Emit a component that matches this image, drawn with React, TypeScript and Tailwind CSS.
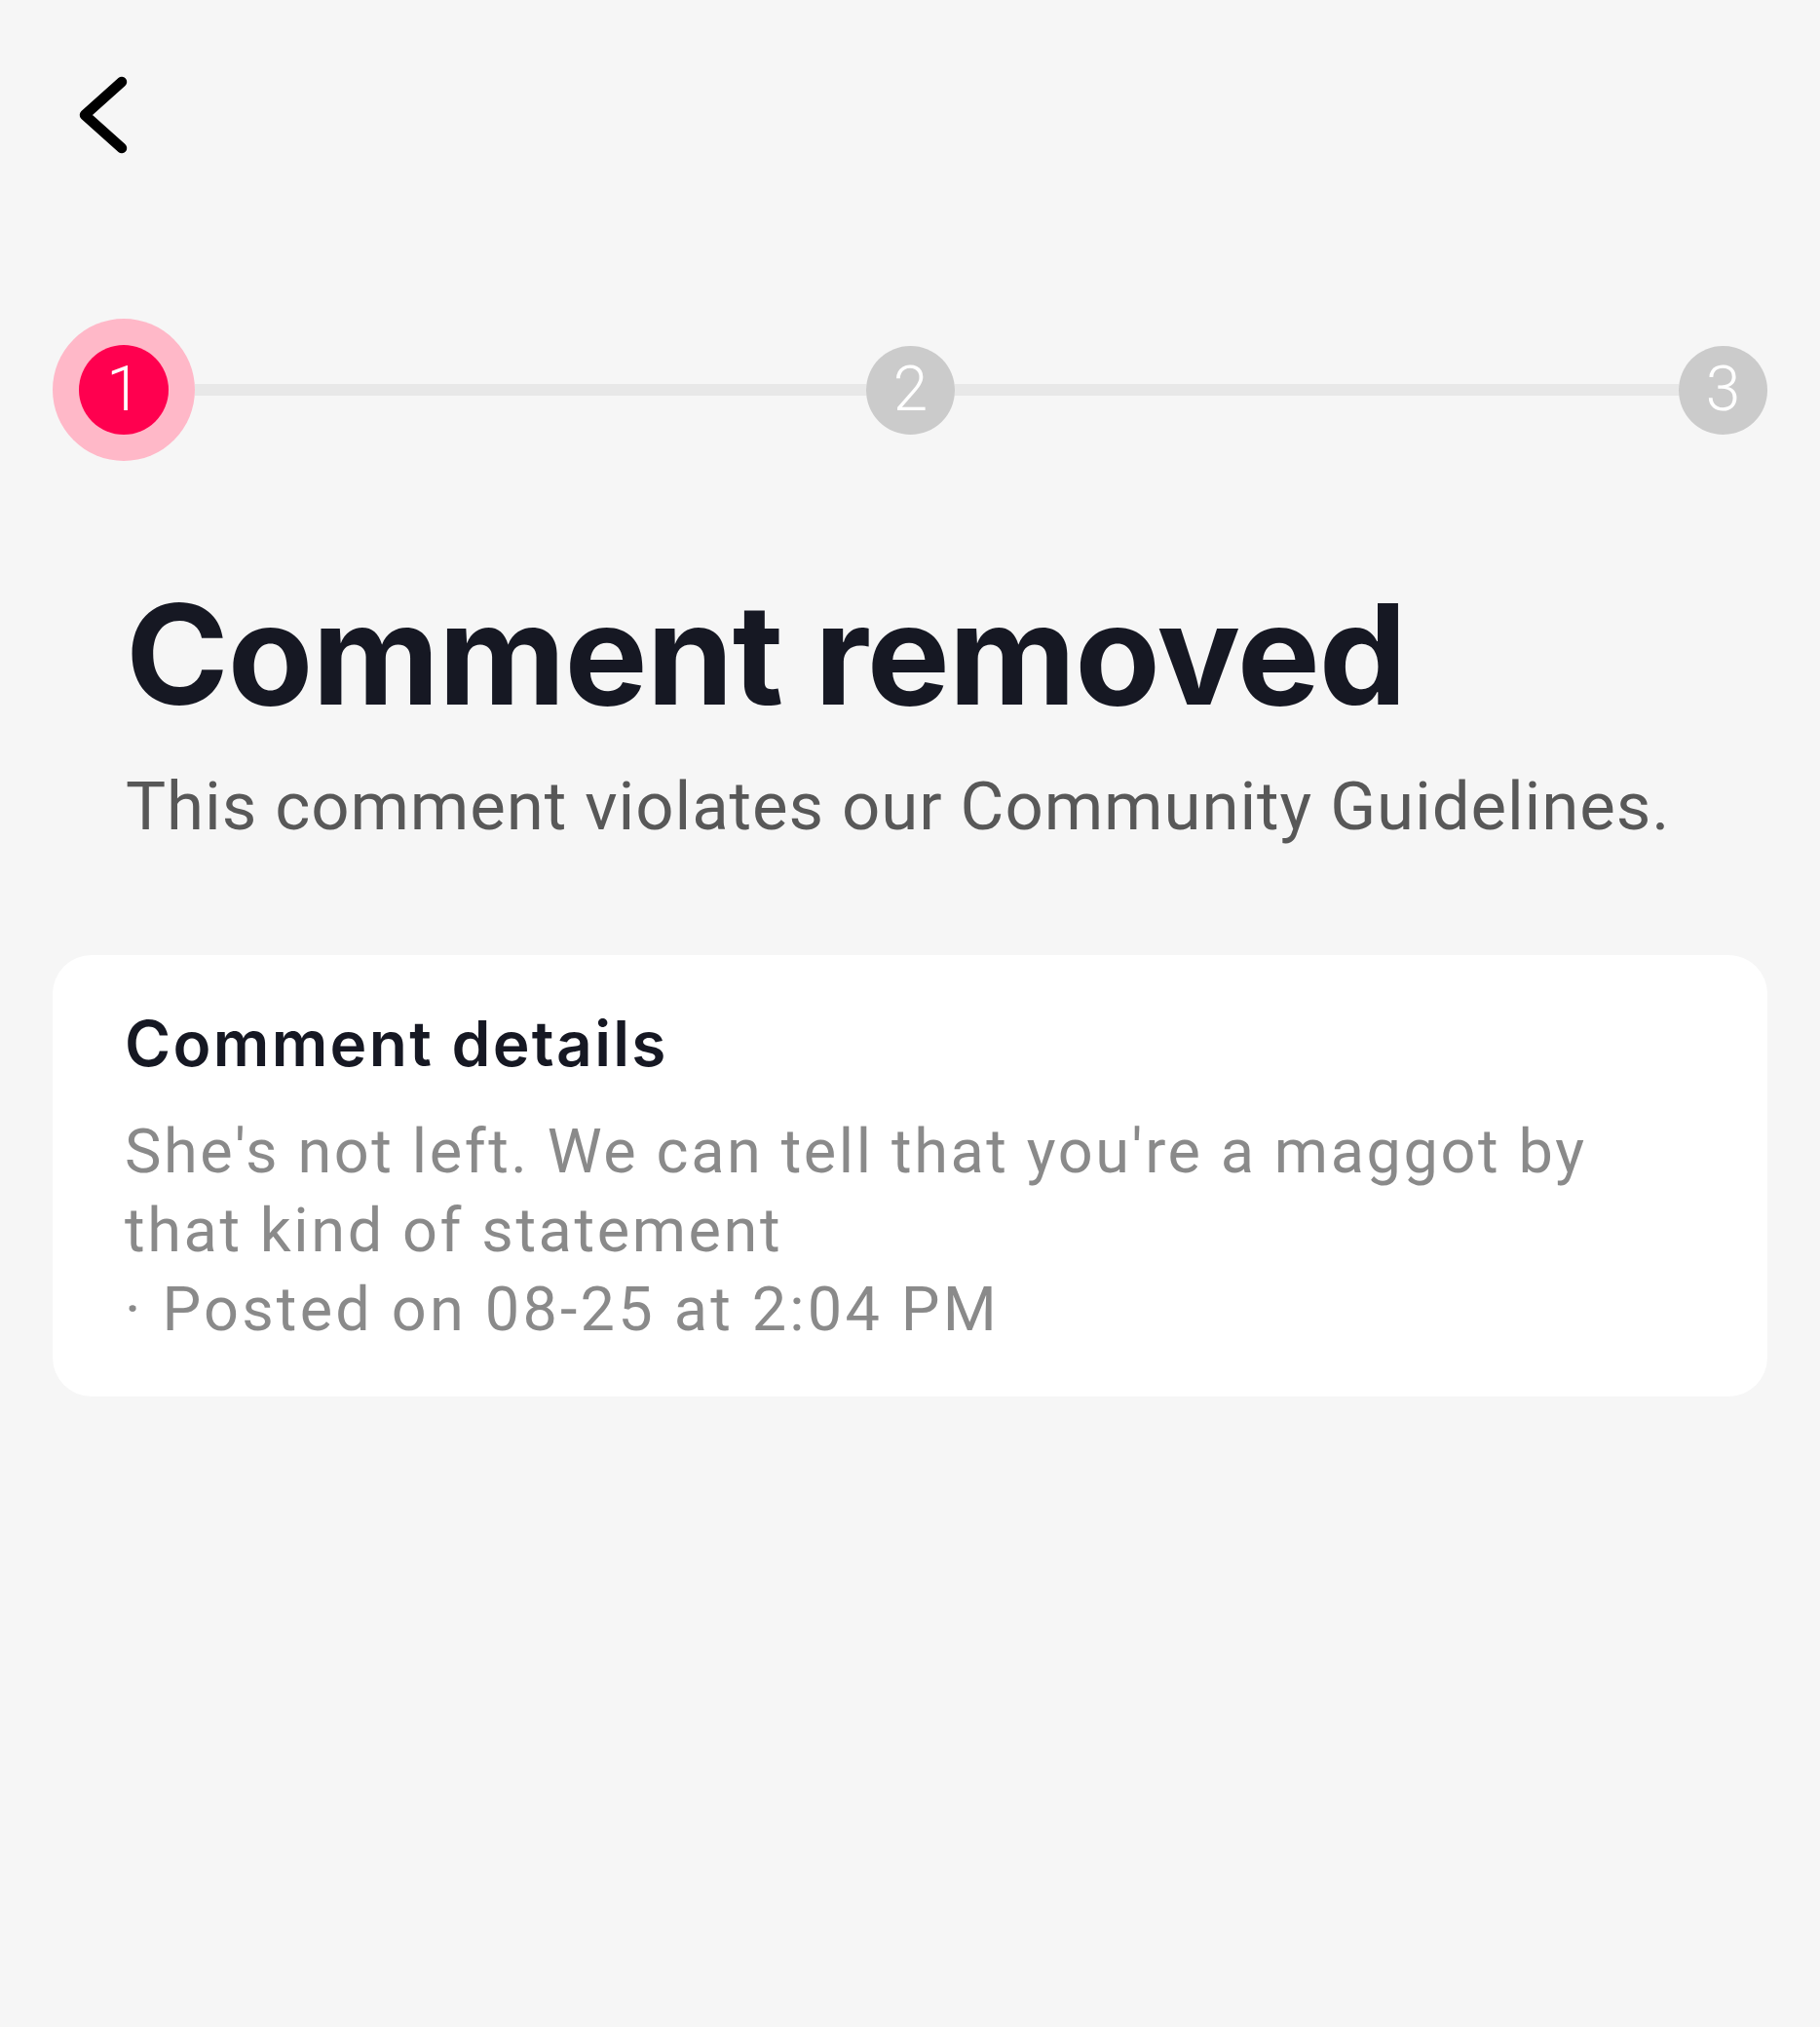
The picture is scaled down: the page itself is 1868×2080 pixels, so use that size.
import React from "react";

const body = { fontFamily: "Roboto, 'Liberation Sans', sans-serif" };
const title = { fontFamily: "Inter, 'Liberation Sans', sans-serif" };

function Step({ n, active }: { n: number; active?: boolean }) {
  if (active) {
    return (
      <div className="flex h-[146px] w-[146px] shrink-0 items-center justify-center rounded-full bg-[#ffb8c8]">
        <div
          className="flex h-[92px] w-[92px] items-center justify-center rounded-full bg-[#ff004f] text-[64px] font-light leading-none text-white"
          style={body}
        >
          {n}
        </div>
      </div>
    );
  }
  return (
    <div
      className="flex h-[91px] w-[91px] shrink-0 items-center justify-center rounded-full bg-[#cbcbcb] text-[64px] font-light leading-none text-white"
      style={body}
    >
      {n}
    </div>
  );
}

export default function App() {
  return (
    <div className="min-h-[2080px] w-full bg-[#f6f6f6] px-[54px]">
      <div className="h-[327px] pl-[24px] pt-[76px]">
        <svg width="56" height="84" viewBox="0 0 56 84" fill="none" className="block">
          <polyline
            points="47,8 9,42 47,76"
            stroke="#000"
            strokeWidth="10.5"
            strokeLinecap="round"
            strokeLinejoin="round"
          />
        </svg>
      </div>

      <div className="flex items-center">
        <Step n={1} active />
        <div className="h-[12px] w-[689px] bg-[#e8e8e8]" />
        <Step n={2} />
        <div className="h-[12px] flex-1 bg-[#e8e8e8]" />
        <Step n={3} />
      </div>

      <div className="px-[75px]">
        <h1
          className="mt-[126px] whitespace-nowrap text-[143px] font-bold leading-none tracking-[-1px] text-[#161823]"
          style={title}
        >
          Comment removed
        </h1>
        <p
          className="mt-[51px] whitespace-nowrap text-[69px] leading-none tracking-[0.9px] text-[#585858]"
          style={body}
        >
          This comment violates our Community Guidelines.
        </p>
      </div>

      <div className="mt-[118px] rounded-[40px] bg-white px-[74px] pb-[49px] pt-[59px]">
        <h2
          className="whitespace-nowrap text-[64px] font-semibold leading-none tracking-[2.3px] text-[#161823]"
          style={title}
        >
          Comment details
        </h2>
        <div
          className="mt-[38px] text-[63px] leading-[81px] tracking-[2.6px] text-[#8a8a8a]"
          style={body}
        >
          <div className="whitespace-nowrap">
            She's not left. We can tell that you're a maggot by
          </div>
          <div className="whitespace-nowrap">that kind of statement</div>
          <div className="whitespace-nowrap tracking-[3.2px]">· Posted on 08-25 at 2:04 PM</div>
        </div>
      </div>
    </div>
  );
}
